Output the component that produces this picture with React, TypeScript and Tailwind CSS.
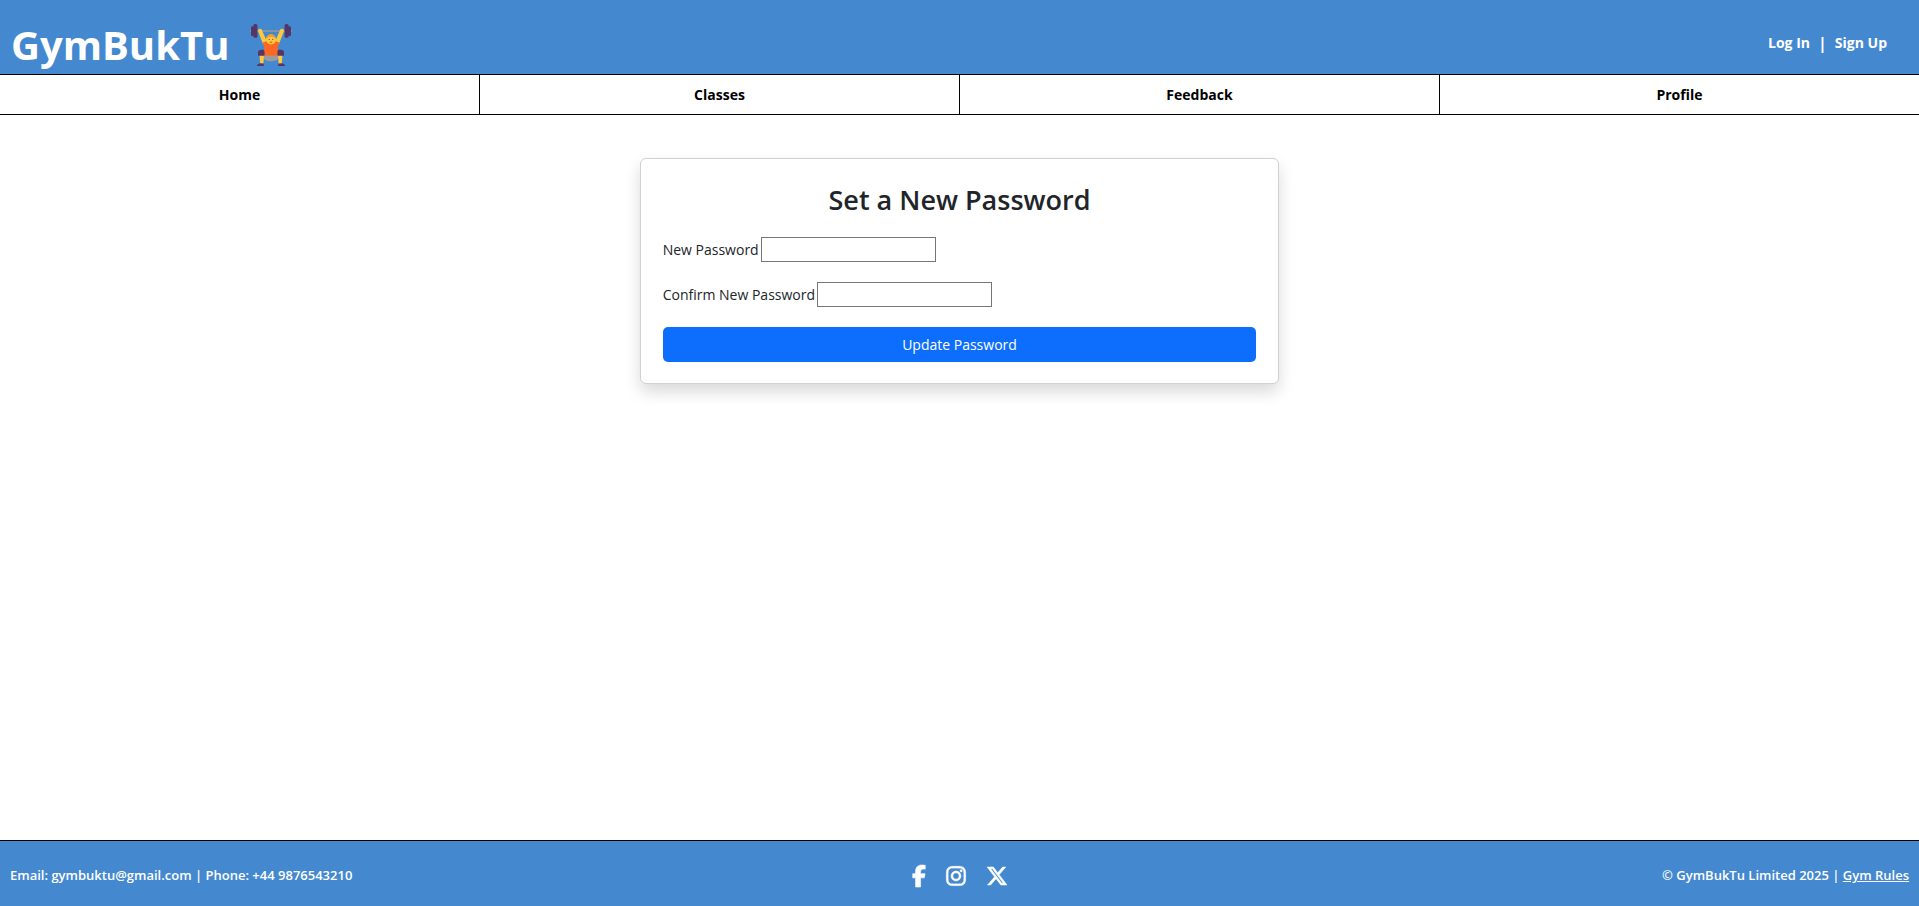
import { FaFacebookF, FaInstagram, FaXTwitter } from "react-icons/fa6";

const navItems = ["Home", "Classes", "Feedback", "Profile"];

const socials = [
  { label: "Facebook", Icon: FaFacebookF, width: "w-[14px]" },
  { label: "Instagram", Icon: FaInstagram, width: "w-5" },
  { label: "X", Icon: FaXTwitter, width: "w-[22px]" },
];

function WeightLifter() {
  return (
    <svg viewBox="0 0 44 44" className="h-11 w-11" aria-hidden="true">
      <rect x="1" y="7.3" width="42" height="1.4" fill="#9b9b9b" />
      <g fill="#533566">
        <rect x="2" y="3.2" width="3" height="10" rx="1.4" />
        <rect x="4.4" y="1" width="4" height="13.8" rx="1.6" />
        <rect x="39" y="3.2" width="3" height="10" rx="1.4" />
        <rect x="35.6" y="1" width="4" height="13.8" rx="1.6" />
      </g>
      <ellipse cx="22" cy="34" rx="8" ry="4.2" fill="#9b9b9b" />
      <path d="M9.500 6.200q1.600-1.200 3.200.200L17.600 18l-3.400 3.600L9.200 8.600z" fill="#ffc83d" />
      <path d="M34.500 6.200q-1.600-1.200-3.200.200L26.400 18l3.400 3.600L34.800 8.600z" fill="#ffc83d" />
      <path d="M10.500 31.500h4.500l-.7 10h-3z" fill="#ffc83d" />
      <path d="M33.500 31.500H29l.7 10h3z" fill="#ffc83d" />
      <path d="M13.600 19.500q8.400-3.600 16.800 0L28.800 24v8.500H15.200V24z" fill="#ff6723" />
      <path d="M9 32.800V30q0-3.200 3.200-3.200h2.400q1.400 1.600.8 6z" fill="#533566" />
      <path d="M35 32.800V30q0-3.200-3.200-3.200h-2.400q-1.400 1.600-.8 6z" fill="#533566" />
      <path d="M8 43v-.6q.4-1.800 3.200-2.200l3.600.2V43z" fill="#533566" />
      <path d="M36 43v-.6q-.4-1.800-3.200-2.200l-3.600.2V43z" fill="#533566" />
      <circle cx="22" cy="16.500" r="5" fill="#ffc83d" />
      <path d="M17.200 15.500q1-4.300 4.800-4.300t4.800 4.300q-4.800-3.600-9.600 0z" fill="#ff9a1f" />
      <circle cx="20.200" cy="16.300" r=".6" fill="#533566" />
      <circle cx="23.800" cy="16.300" r=".6" fill="#533566" />
      <path d="M20.800 19.200h2.400" stroke="#c0392b" strokeWidth=".8" />
    </svg>
  );
}

function PasswordField({ id, label }: { id: string; label: string }) {
  return (
    <div className="flex items-center gap-0.5">
      <label htmlFor={id}>{label}</label>
      <input
        id={id}
        type="password"
        className="h-[25px] w-[175px] border border-[#767676] bg-white px-1 outline-none"
      />
    </div>
  );
}

export default function App() {
  return (
    <div className="flex min-h-screen flex-col bg-white font-['Open_Sans','Noto_Sans',sans-serif] text-sm text-[#212529]">
      <header className="flex h-[75px] items-center justify-between border-b border-black bg-[#4489d0] pr-8 pl-[11px] text-white">
        <h1 className="flex items-center gap-5 pt-4 text-[40px] leading-[54px] font-bold">
          GymBukTu
          <WeightLifter />
        </h1>
        <div className="flex items-center gap-2 pt-3 font-bold">
          <a href="#login">Log In</a>
          <span className="text-base leading-5">|</span>
          <a href="#signup">Sign Up</a>
        </div>
      </header>

      <nav className="flex h-10 divide-x divide-black border-b border-black font-bold text-black">
        {navItems.map((item) => (
          <a key={item} href={`#${item.toLowerCase()}`} className="flex flex-1 items-center justify-center">
            {item}
          </a>
        ))}
      </nav>

      <main className="flex-1 pt-[43px]">
        <section className="mx-auto w-1/3 rounded-md border border-[#d0d1d2] bg-white px-[22px] py-[21px] shadow-[0_8px_16px_rgba(0,0,0,0.15)]">
          <h2 className="text-center text-[27px] leading-10 font-semibold">Set a New Password</h2>
          <form className="mt-[17px] flex flex-col gap-5" onSubmit={(e) => e.preventDefault()}>
            <PasswordField id="new-password" label="New Password" />
            <PasswordField id="confirm-password" label="Confirm New Password" />
            <button type="submit" className="h-[35px] w-full rounded-[5px] bg-[#0d6efd] text-white">
              Update Password
            </button>
          </form>
        </section>
      </main>

      <footer className="grid h-[66px] grid-cols-3 items-center border-t border-black bg-[#4489d0] px-[10px] pt-1 text-[13px] font-semibold text-white">
        <p>Email: gymbuktu@gmail.com | Phone: +44 9876543210</p>
        <div className="flex items-center justify-center gap-5">
          {socials.map(({ label, Icon, width }) => (
            <a key={label} href={`#${label.toLowerCase()}`} aria-label={label}>
              <Icon className={`h-[22px] overflow-visible stroke-current stroke-[14px] ${width}`} />
            </a>
          ))}
        </div>
        <p className="text-right">
          © GymBukTu Limited 2025 |{" "}
          <a href="#rules" className="underline">
            Gym Rules
          </a>
        </p>
      </footer>
    </div>
  );
}
